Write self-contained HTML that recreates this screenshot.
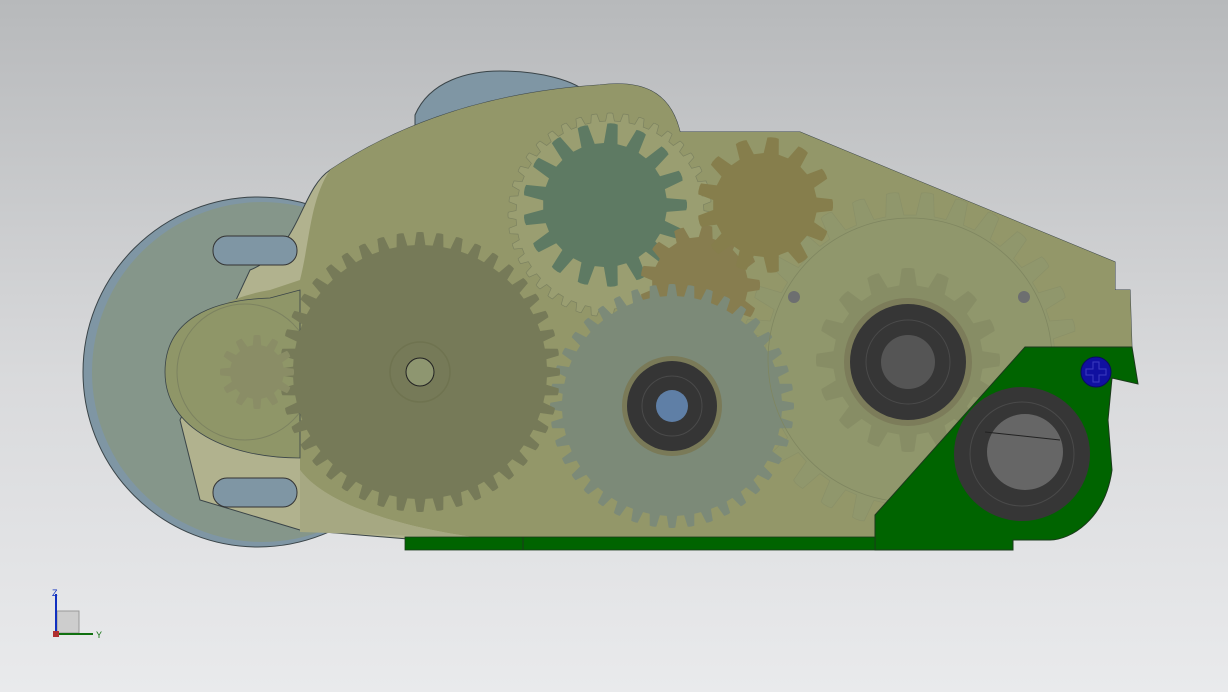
<!DOCTYPE html>
<html><head><meta charset="utf-8"><style>
html,body{margin:0;padding:0;width:1228px;height:692px;overflow:hidden;background:linear-gradient(#b7b9bb,#d9dadc 55%,#e9eaec);}
svg{position:absolute;left:0;top:0}
</style></head><body>
<svg id="s" width="1228" height="692" viewBox="0 0 1228 692">
<circle cx="258" cy="372" r="175" fill="#7f96a4" stroke="#3a4448" stroke-width="1"/>
<circle cx="262" cy="372" r="170" fill="#85968a"/>
<path d="M415 115 C430 80 470 71 500 71 C540 71 575 80 590 95 L590 120 L415 130 Z" fill="#7f96a4" stroke="#3a4448"/>
<path d="M250 270 C300 250 300 190 330 170 C420 110 520 90 600 85 C640 80 670 90 680 132 L800 132 L1115 262 L1115 290 L1130 290 L1132 350 L1000 540 L420 540 L300 530 L200 500 L180 420 Z" fill="#b1b28e" stroke="#3a4448" stroke-width="1"/>
<path d="M330 170 C420 110 520 90 600 85 C640 80 670 90 680 132 L800 132 L1115 262 L1115 290 L1130 290 L1132 350 L1000 540 L480 538 C420 530 330 510 300 470 L300 420 C250 420 200 400 180 370 C180 330 210 300 270 290 L300 280 C310 240 310 200 330 170 Z" fill="#939769"/>
<path d="M300 470 C330 510 420 530 480 538 L300 532 Z" fill="#a6a882"/>
<path d="M165 372 C165 320 210 300 270 298 L300 290 L300 458 C230 458 165 430 165 372Z" fill="#8f9668" stroke="#3a4448" stroke-width="0.8"/>
<rect x="213" y="236" width="84" height="29" rx="14" fill="#7f96a4" stroke="#333"/>
<rect x="213" y="478" width="84" height="29" rx="14" fill="#7f96a4" stroke="#333"/>
<circle cx="245" cy="372" r="68" fill="none" stroke="#7c8260" stroke-width="1"/>
<g id="g"></g>
<circle cx="910" cy="360" r="142" fill="none" stroke="#7f8660" stroke-width="0.8"/>
<path d="M1025 347 L1132 347 L1138 384 L1112 378 L1108 420 L1112 470 C1105 520 1070 540 1050 540 L1013 540 L1013 550 L875 550 L875 515 Z" fill="#006400" stroke="#1b3a1b"/>
<rect x="405" y="537" width="470" height="13" fill="#006400" stroke="#1b3a1b" stroke-width="0.8"/>
<line x1="523" y1="537" x2="523" y2="550" stroke="#1b3a1b"/>
<circle cx="672" cy="406" r="50" fill="#7a7a58"/>
<circle cx="672" cy="406" r="45" fill="#353535"/>
<circle cx="672" cy="406" r="30" fill="none" stroke="#4a4a4a"/>
<circle cx="672" cy="406" r="16" fill="#5f7fa6"/>
<circle cx="908" cy="362" r="64" fill="#7c7c5a"/>
<circle cx="908" cy="362" r="58" fill="#363636"/>
<circle cx="908" cy="362" r="42" fill="none" stroke="#4a4a4a"/>
<circle cx="908" cy="362" r="27" fill="#555"/>
<ellipse cx="1022" cy="454" rx="68" ry="67" fill="#363636"/>
<circle cx="1022" cy="454" r="52" fill="none" stroke="#4a4a4a"/>
<circle cx="1025" cy="452" r="38" fill="#666"/>
<line x1="985" y1="432" x2="1060" y2="440" stroke="#222"/>
<circle cx="1096" cy="372" r="15" fill="#1010a0" stroke="#0b0b60"/>
<path d="M1093 362h6v7h7v6h-7v7h-6v-7h-7v-6h7z" fill="none" stroke="#3b3bc0"/>
<circle cx="420" cy="372" r="14" fill="#8e9670" stroke="#222"/>
<circle cx="420" cy="372" r="30" fill="none" stroke="#6f7350" stroke-width="1.5"/>
<circle cx="794" cy="297" r="6" fill="#6d6f70"/><circle cx="1024" cy="297" r="6" fill="#6d6f70"/>
<rect x="57" y="611" width="22" height="22" fill="#cdcdcd" stroke="#999"/>
<line x1="56" y1="594" x2="56" y2="634" stroke="#1030c0" stroke-width="2"/>
<line x1="56" y1="634" x2="93" y2="634" stroke="#107010" stroke-width="2"/>
<rect x="53" y="631" width="6" height="6" fill="#b03030"/>
<text x="52" y="596" font-family="Liberation Sans,sans-serif" font-size="9" fill="#1030c0">Z</text>
<text x="96" y="638" font-family="Liberation Sans,sans-serif" font-size="9" fill="#107010">Y</text>
</svg>
<script>
function gear(cx,cy,ro,ri,n,fill,op,stroke){
 let d='';for(let i=0;i<n;i++){const a=i*2*Math.PI/n,s=Math.PI/n;
 const pts=[[ri,a-s*0.6],[ro*0.97+ri*0.03,a-s*0.35],[ro,a-s*0.15],[ro,a+s*0.15],[ro*0.97+ri*0.03,a+s*0.35],[ri,a+s*0.6],[ri,a+s*1.4]];
 pts.forEach((p,j)=>{d+=(i==0&&j==0?'M':'L')+(cx+p[0]*Math.cos(p[1])).toFixed(1)+' '+(cy+p[0]*Math.sin(p[1])).toFixed(1)+' ';});}
 d+='Z';const e=document.createElementNS('http://www.w3.org/2000/svg','path');
 e.setAttribute('d',d);e.setAttribute('fill',fill);e.setAttribute('fill-opacity',op);
 if(stroke){e.setAttribute('stroke',stroke);e.setAttribute('stroke-width','0.7');}
 document.getElementById('g').appendChild(e);}
gear(910,360,168,145,30,'#8d9670',0.45,'#8a9068');
gear(610,215,102,94,40,'#a1a57a',0.5,'#7c8260');
gear(908,360,92,75,16,'#7f8560',0.55);
gear(605,205,82,62,17,'#5e7a63',1);
gear(700,285,60,48,13,'#877d4f',1);
gear(765,205,68,52,13,'#867e4c',1);
gear(672,406,122,110,40,'#7c8a78',1);
gear(420,372,140,127,44,'#767a58',1);
gear(257,372,37,27,12,'#8a8d66',1);
</script>
</body></html>
